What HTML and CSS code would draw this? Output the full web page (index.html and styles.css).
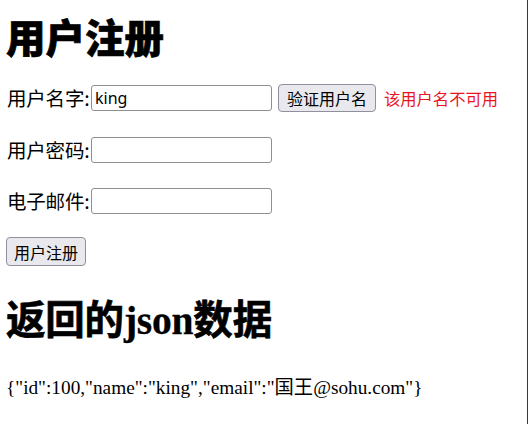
FILE: index.html
```html
<!DOCTYPE html>
<html lang="zh-CN">
<head>
<meta charset="utf-8">
<title>用户注册</title>
<link rel="stylesheet" href="styles.css">
</head>
<body>
<div class="page">
  <h1 class="title">用户注册</h1>
  <form class="form">
    <div class="row">
      <label class="label">用户名字:</label>
      <input class="field" type="text" value="king">
      <button class="btn btn-check" type="button">验证用户名</button>
      <span class="msg">该用户名不可用</span>
    </div>
    <div class="row">
      <label class="label">用户密码:</label>
      <input class="field" type="password">
    </div>
    <div class="row">
      <label class="label">电子邮件:</label>
      <input class="field" type="text">
    </div>
    <div class="row row-submit">
      <button class="btn" type="button">用户注册</button>
    </div>
  </form>
  <h1 class="title title-json">返回的<span class="latin">json</span>数据</h1>
  <p class="json">{"id":100,"name":"king","email":"国王@sohu.com"}</p>
</div>
</body>
</html>
```
FILE: styles.css
```css
html {
  background: #fff;
  border-right: 1px solid #3a3a3a;
  min-height: 100%;
  box-sizing: border-box;
}
body {
  margin: 0;
  color: #000;
  font-family: "Liberation Sans", "Noto Sans CJK SC", sans-serif;
}
.page {
  padding: 13px 0 0 6px;
  display: flex;
  flex-direction: column;
}
.title {
  margin: 0;
  font-family: "Noto Sans CJK SC", sans-serif;
  font-size: 39.5px;
  font-weight: 900;
  line-height: 46px;
  height: 46px;
  -webkit-text-stroke: 0.7px #000;
}
.title-json {
  margin-top: 32px;
  font-family: "Liberation Serif", "Noto Sans CJK SC", serif;
  font-weight: 700;
  letter-spacing: -0.2px;
}
.latin {
  -webkit-text-stroke: 0.3px #000;
}
.form {
  margin-top: 25px;
  display: flex;
  flex-direction: column;
  gap: 25px;
}
.row {
  display: flex;
  align-items: center;
}
.row-submit {
  margin-top: -2px;
}
.label {
  width: 85px;
  padding-left: 1px;
  box-sizing: border-box;
  font-family: "Noto Sans CJK SC", sans-serif;
  font-size: 19.5px;
  line-height: 26px;
  letter-spacing: -0.2px;
  white-space: nowrap;
}
.field {
  width: 181px;
  height: 26px;
  box-sizing: border-box;
  margin: 0;
  padding: 0 3px;
  border: 1px solid #8f8f8f;
  border-radius: 3px;
  font-family: "Noto Sans", "Noto Sans CJK SC", sans-serif;
  font-size: 16px;
  color: #000;
  background: #fff;
}
.btn {
  height: 29px;
  box-sizing: border-box;
  margin: 0;
  padding: 0 7px;
  border: 1px solid #8f8f9d;
  border-radius: 4px;
  background: #e9e9ed;
  font-family: "Noto Sans CJK SC", sans-serif;
  font-size: 16px;
  line-height: 26px;
  color: #000;
}
.btn-check {
  margin-left: 6px;
  height: 28px;
  padding: 0 8px;
}
.msg {
  margin-left: 8px;
  color: #e8141e;
  font-family: "Noto Sans CJK SC", sans-serif;
  font-size: 16.3px;
}
.json {
  margin: 33px 0 0 0;
  font-family: "Liberation Serif", "Noto Sans CJK SC", serif;
  font-size: 19.3px;
  line-height: 22px;
}
```
